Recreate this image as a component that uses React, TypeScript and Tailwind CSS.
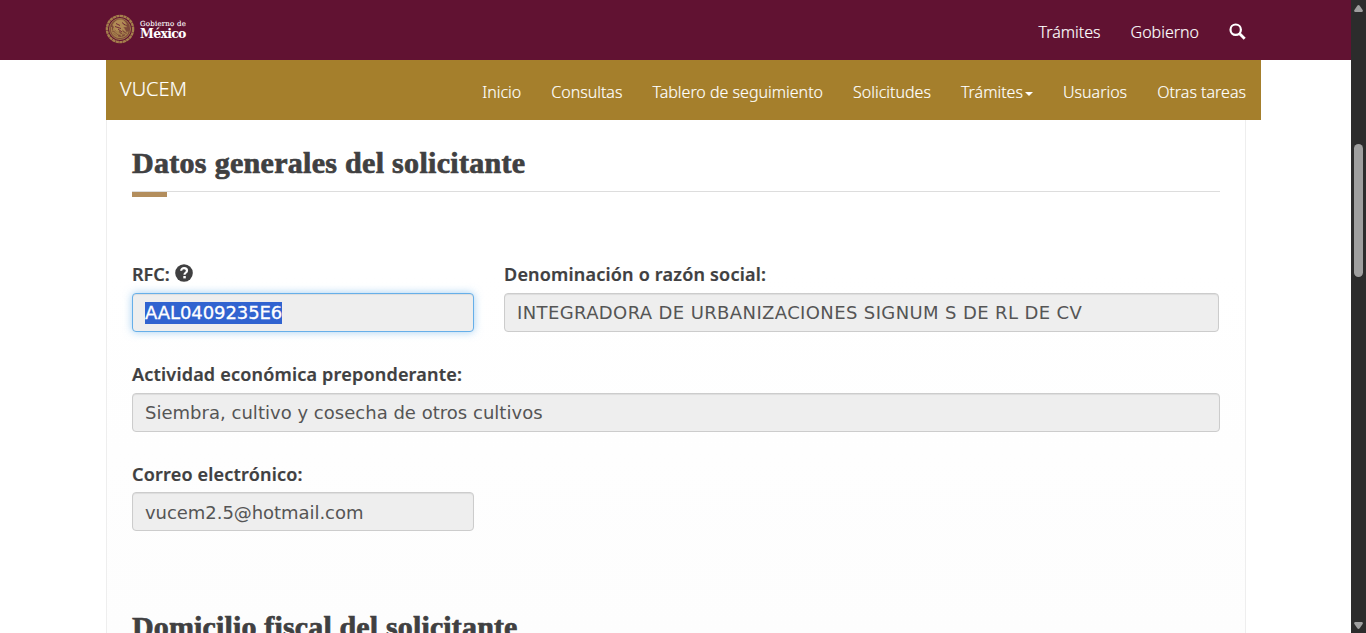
import type { ReactNode } from "react";

const navItems = [
  { label: "Inicio" },
  { label: "Consultas" },
  { label: "Tablero de seguimiento" },
  { label: "Solicitudes" },
  { label: "Trámites", caret: true },
  { label: "Usuarios" },
  { label: "Otras tareas" },
];

function Seal() {
  return (
    <svg viewBox="0 0 30 30" className="size-[30px] shrink-0" fill="none" stroke="#a57f4c">
      <circle cx="15" cy="15" r="13.1" strokeWidth="2.4" strokeDasharray="3.2 .4" />
      <circle cx="15" cy="15" r="10.6" fill="#7d4838" strokeWidth=".8" />
      <path d="M7.5 11c2-5 8-7 12-4l2.5 3.5-4-.5 4 3-3.5 0 3.5 6-5-3.5 1.5 5-4.5-4-1 4-2.5-4.5-3 1 1.5-4z" fill="#b18b55" strokeWidth=".4" />
      <path d="M6.5 13c-1 6 3 10.5 9 10.5 4 0 7-3 7.500-6M8.500 14c1 4 4 6.500 9 6.500M8 18l5 4M12 17l5 5M17 18l4 2.500" strokeWidth="1.2" />
      <path d="M11 9.500l4 2m-5 1 6 2m1-6 3 2.500M13 15l4 3" stroke="#611232" strokeWidth=".8" />
    </svg>
  );
}

function Header() {
  return (
    <header className="flex h-[60px] items-center bg-[#611232] px-[105px] text-white">
      <a href="#" className="-mt-0.5 flex items-center gap-[5px] font-['DejaVu_Serif','Liberation_Serif',serif] leading-none">
        <Seal />
        <span className="flex flex-col pt-px">
          <span className="text-[7px] leading-[8px] tracking-[0.22px] [-webkit-text-stroke:0.1px_white]">Gobierno de</span>
          <span className="text-[12.5px] font-bold leading-[11px] tracking-[-0.7px]">México</span>
        </span>
      </a>
      <nav className="ml-auto flex items-center gap-[30px] pt-1 text-[16px] font-light [-webkit-text-stroke:0.15px_white]">
        <a href="#">Trámites</a>
        <a href="#">Gobierno</a>
        <a href="#" aria-label="Buscar" className="-mt-0.5">
          <svg viewBox="0 0 17 17" className="size-[17px]" fill="none" stroke="white">
            <circle cx="6.7" cy="6.7" r="5.2" strokeWidth="2.2" />
            <path d="M10.7 10.7l5 5" strokeWidth="2.8" />
          </svg>
        </a>
      </nav>
    </header>
  );
}

function Navbar() {
  return (
    <div className="ml-[106px] flex h-[60px] w-[1155px] shrink-0 bg-[#a57f2c] pl-[14px] pr-[15px] text-white [-webkit-text-stroke:0.15px_white]">
      <a href="#" className="mt-[15px] text-[20px] font-light leading-[28px]">VUCEM</a>
      <nav className="ml-auto mt-1 flex items-center gap-[30px] whitespace-nowrap text-[16px] font-light">
        {navItems.map((item) => (
          <a key={item.label} href="#" className="flex items-center">
            {item.label}
            {item.caret && (
              <span className="ml-[2px] mt-[3px] border-x-4 border-t-4 border-x-transparent border-t-white" />
            )}
          </a>
        ))}
      </nav>
    </div>
  );
}

function Title({ children, wide }: { children: ReactNode; wide?: boolean }) {
  return (
    <div className="border-b border-[#dddddd]">
      <h3
        className={`h-[46px] whitespace-nowrap font-['Liberation_Serif',serif] text-[30px] font-bold leading-[36px] text-[#404041] [-webkit-text-stroke:0.7px_#404041] ${
          wide ? "tracking-[0.15px]" : "tracking-[0.3px]"
        }`}
      >
        {children}
      </h3>
    </div>
  );
}

function Field({ label, value, help, selected, className = "", valueClass = "" }: {
  label: string;
  value: string;
  help?: boolean;
  selected?: boolean;
  className?: string;
  valueClass?: string;
}) {
  return (
    <div className={className}>
      <div className="flex h-[31px] items-start gap-[5px] text-[18px] font-semibold leading-[25px] tracking-[0.2px] text-[#404041] [-webkit-text-stroke:0.2px_#404041]">
        <span className={help ? "tracking-normal" : ""}>{label}</span>
        {help && (
          <svg viewBox="0 0 18 18" className="mt-[2px] size-[18px]">
            <circle cx="9" cy="9" r="8.8" fill="#404041" />
            <path d="M6.2 6.8C6.2 3.1 12 3.3 12 6.7c0 2-2.5 2.1-2.5 4" fill="none" stroke="white" strokeWidth="2.2" />
            <path d="M8.3 12h2.5v2.4H8.3z" fill="white" />
          </svg>
        )}
      </div>
      <div
        className={`flex h-[39px] items-center rounded-[4px] border bg-[#eeeeee] px-3 font-['DejaVu_Sans',sans-serif] text-[18px] leading-[22px] text-[#555555] ${
          selected
            ? "border-[#66afe9] shadow-[inset_0_1px_1px_rgba(0,0,0,0.075),0_0_8px_rgba(102,175,233,0.6)]"
            : "border-[#cccccc] shadow-[inset_0_1px_1px_rgba(0,0,0,0.075)]"
        }`}
      >
        <span className={`${selected ? "bg-[#3063d0] text-white [-webkit-text-stroke:0.3px_white]" : ""} ${valueClass}`}>{value}</span>
      </div>
    </div>
  );
}

function Scrollbar() {
  return (
    <div className="flex w-[15px] shrink-0 flex-col items-center bg-[#2c2c2c]">
      <svg viewBox="0 0 9 7" className="mt-[5px] h-[7px] w-[9px]">
        <path d="M3.3.7Q4.5-.5 5.7.7L8.8 5.3Q9 7 7.8 7H1.2Q0 7 .2 5.3z" fill="#9f9f9f" />
      </svg>
      <div className="mt-[132px] h-[133px] w-[9px] rounded-full bg-[#9f9f9f]" />
      <svg viewBox="0 0 9 7" className="mb-[4px] mt-auto h-[7px] w-[9px] rotate-180">
        <path d="M3.3.7Q4.5-.5 5.7.7L8.8 5.3Q9 7 7.8 7H1.2Q0 7 .2 5.3z" fill="#9f9f9f" />
      </svg>
    </div>
  );
}

export default function App() {
  return (
    <div className="flex h-[633px] w-[1366px] overflow-hidden bg-white font-['Noto_Sans',sans-serif]">
      <div className="flex flex-1 flex-col overflow-hidden">
        <Header />
        <Navbar />
        <main className="ml-[106px] w-[1140px] flex-1 overflow-hidden border-x border-[#eeeeee] bg-linear-to-b from-white from-30% to-[#fdfdfd] px-[25px] pt-[25px]">
          <Title>Datos generales del solicitante</Title>
          <div className="h-[5px] w-[35px] bg-[#b38e5d]" />
          <div className="mt-[65px] flex gap-[30px]">
            <Field label="RFC:" value="AAL0409235E6" help selected className="w-[342px]" valueClass="tracking-[-0.08px]" />
            <Field
              label="Denominación o razón social:"
              value="INTEGRADORA DE URBANIZACIONES SIGNUM S DE RL DE CV"
              className="w-[715px]"
              valueClass="tracking-[0.38px]"
            />
          </div>
          <Field
            label="Actividad económica preponderante:"
            value="Siembra, cultivo y cosecha de otros cultivos"
            className="mt-[30px]"
            valueClass="tracking-[0.02px]"
          />
          <Field
            label="Correo electrónico:"
            value="vucem2.5@hotmail.com"
            className="-mb-px mt-[30px] w-[342px] [&>div:first-child]:h-[30px]"
            valueClass="mt-[2px] tracking-[-0.05px]"
          />
          <div className="mt-[79px]">
            <Title wide>Domicilio fiscal del solicitante</Title>
          </div>
        </main>
      </div>
      <Scrollbar />
    </div>
  );
}
